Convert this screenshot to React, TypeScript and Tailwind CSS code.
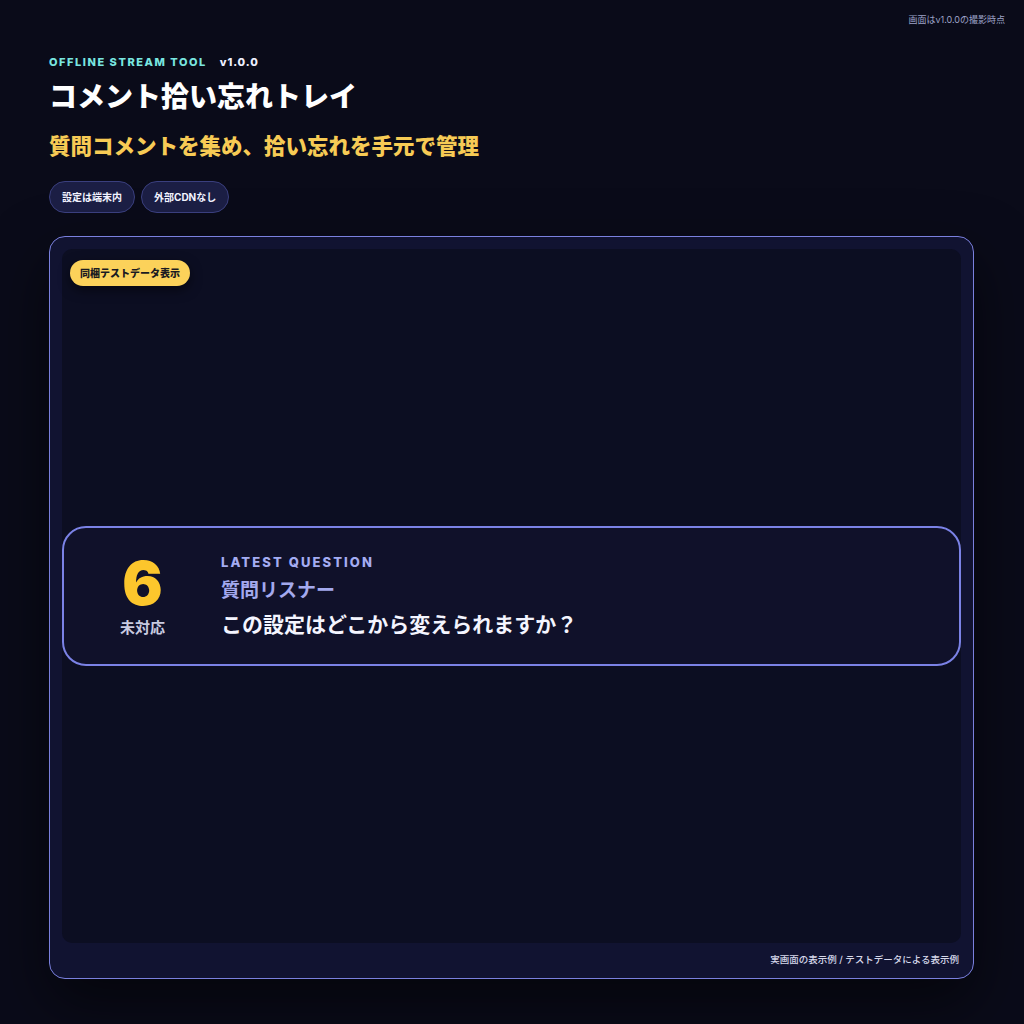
import React from "react";

export default function App() {
  return (
    <div
      className="w-full min-h-screen bg-[#0a0b19] text-white"
      style={{ fontFamily: '"Inter", "Noto Sans", "Noto Sans CJK JP", sans-serif' }}
    >
      <div className="flex justify-end pr-[19px] pt-[14px] h-[40px]">
        <span className="text-[9px] leading-[12px] text-[#9ea3c8]">画面はv1.0.0の撮影時点</span>
      </div>
      <div className="pl-[49px] pr-[50px]">
        <div className="flex items-center gap-[13px] mt-[15px] h-[14px]">
          <span className="text-[11px] font-extrabold tracking-[0.14em] text-[#79e6e0]">OFFLINE STREAM TOOL</span>
          <span className="text-[11px] font-extrabold tracking-[0.08em] text-[#eef0ff]">v1.0.0</span>
        </div>
        <h1 className="mt-[10px] text-[28px] leading-[36px] font-extrabold text-white">コメント拾い忘れトレイ</h1>
        <p className="mt-[17px] text-[21.5px] leading-[28px] font-extrabold text-[#f7cb55]">質問コメントを集め、拾い忘れを手元で管理</p>
        <div className="mt-[21px] flex gap-[6px]">
          <span className="h-[32px] px-[12px] flex items-center rounded-full bg-[#1b1e44] border border-[#3a3f7e] text-[10px] font-bold text-[#f2f3ff]">設定は端末内</span>
          <span className="h-[32px] px-[12px] flex items-center rounded-full bg-[#1b1e44] border border-[#3a3f7e] text-[10px] font-bold text-[#f2f3ff]">外部CDNなし</span>
        </div>
        <div className="mt-[23px] h-[743px] rounded-[16px] border-[1.5px] border-[#7a80de] bg-[#111331] p-[12px] pb-0 flex flex-col shadow-[0_24px_60px_rgba(0,0,0,0.55)]">
          <div className="relative flex-1 rounded-[10px] bg-[#0c0e22] flex items-center">
            <span className="absolute left-[8px] top-[11px] h-[26px] px-[10px] flex items-center rounded-full bg-[#fcd25a] text-[#1a1a22] text-[10px] font-extrabold shadow-[0_4px_12px_rgba(0,0,0,0.5)]">同梱テストデータ表示</span>
            <div className="w-full h-[140px] rounded-[24px] border-2 border-[#7b82e6] bg-[#10112a] flex items-center">
              <div className="w-[157px] flex flex-col items-center">
                <span className="text-[60px] leading-[56px] font-black text-[#fcc62c]">6</span>
                <span className="mt-[8px] text-[15px] leading-[18px] font-bold text-[#c9cbe0]">未対応</span>
              </div>
              <div className="flex flex-col">
                <span className="text-[13px] leading-[16px] font-extrabold tracking-[0.16em] text-[#a4acf2]">LATEST QUESTION</span>
                <span className="mt-[9px] text-[19px] leading-[24px] font-bold text-[#a3a9ee]">質問リスナー</span>
                <span className="mt-[9px] text-[21px] leading-[26px] font-bold text-[#f4f5ff]">この設定はどこから変えられますか？</span>
              </div>
            </div>
          </div>
          <div className="h-[35px] flex items-center justify-end pr-[2px]">
            <span className="text-[9.5px] font-medium text-[#d6d8ea]">実画面の表示例 / テストデータによる表示例</span>
          </div>
        </div>
      </div>
    </div>
  );
}
